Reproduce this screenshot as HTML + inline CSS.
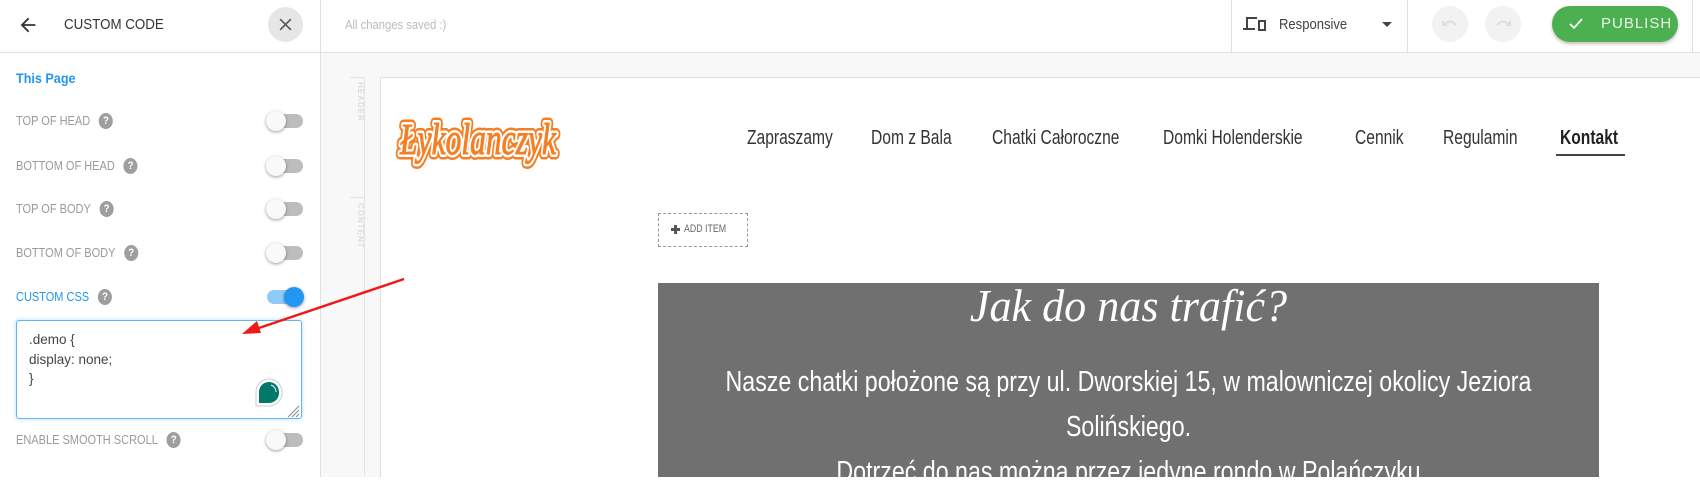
<!DOCTYPE html>
<html><head><meta charset="utf-8"><style>
*{margin:0;padding:0;box-sizing:border-box}
body{width:1700px;height:477px;overflow:hidden;background:#fff;font-family:"Liberation Sans",sans-serif;position:relative}
.a{position:absolute}
.lbl{position:absolute;left:16px;font-size:12.5px;color:#9a9a9a;transform:translateY(-50%) scaleX(.88);transform-origin:left center;white-space:nowrap;display:flex;align-items:center}
.q{display:inline-block;width:16px;height:16px;border-radius:50%;background:#9e9e9e;color:#fff;font-size:11px;font-weight:bold;text-align:center;line-height:16px;margin-left:10px}
.tg{position:absolute;left:267px;width:36px;height:14px;border-radius:7px;background:#bdbdbd;transform:translateY(-50%)}
.tg::after{content:"";position:absolute;left:-1px;top:-3px;width:20px;height:20px;border-radius:50%;background:#f9f9f9;box-shadow:0 1px 3px rgba(0,0,0,.4)}
.tg.on{background:#90caf9}.tg.on::after{left:17px;background:#2196f3}
.nav{position:absolute;top:127px;font-size:20px;color:#333;white-space:nowrap;transform:scaleX(.78);transform-origin:left top}
.p{position:absolute;left:528px;width:1201px;text-align:center;color:#fff;font-size:29px;white-space:nowrap;transform:scaleX(.8);transform-origin:center top}
</style></head><body>
<div class="a" style="left:0;top:52px;width:1700px;height:1px;background:#e0e0e0"></div>
<svg class="a" style="left:17px;top:14px" width="22" height="22" viewBox="0 0 24 24"><path d="M20 11H7.8l5.6-5.6L12 4l-8 8 8 8 1.4-1.4L7.8 13H20z" fill="#333"/></svg>
<div class="a" style="left:64px;top:17px;font-size:14.5px;color:#333;transform:scaleX(.92);transform-origin:left">CUSTOM CODE</div>
<div class="a" style="left:268px;top:7px;width:35px;height:35px;border-radius:50%;background:#e6e6e6"></div>
<svg class="a" style="left:278px;top:17px" width="15" height="15" viewBox="0 0 14 14"><path d="M2 2L12 12M12 2L2 12" stroke="#555" stroke-width="1.5"/></svg>
<div class="a" style="left:320px;top:0;width:1px;height:477px;background:#e0e0e0"></div>
<div class="a" style="left:345px;top:18px;font-size:12.5px;color:#bbb;transform:scaleX(.9);transform-origin:left">All changes saved :)</div>
<div class="a" style="left:1231px;top:0;width:1px;height:52px;background:#e0e0e0"></div>
<svg class="a" style="left:1243px;top:15px" width="24" height="18" viewBox="0 0 24 18"><path d="M3 2h11v2H5v10H3zM0 13h12v2H0zM15 5h8v11h-8zM17 7v7h4V7z" fill="#444"/></svg>
<div class="a" style="left:1279px;top:17px;font-size:14.5px;color:#444;transform:scaleX(.9);transform-origin:left">Responsive</div>
<div class="a" style="left:1382px;top:22px;border-left:5px solid transparent;border-right:5px solid transparent;border-top:5px solid #444"></div>
<div class="a" style="left:1407px;top:0;width:1px;height:52px;background:#e0e0e0"></div>
<div class="a" style="left:1432px;top:6px;width:36px;height:36px;border-radius:50%;background:#f2f2f2"></div>
<div class="a" style="left:1485px;top:6px;width:36px;height:36px;border-radius:50%;background:#f2f2f2"></div>
<svg class="a" style="left:1441px;top:16px" width="18" height="14"><path d="M3 9Q9 2 15 9" stroke="#ddd" stroke-width="2" fill="none"/><path d="M1 4v6h6z" fill="#ddd"/></svg>
<svg class="a" style="left:1494px;top:16px" width="18" height="14"><path d="M3 9Q9 2 15 9" stroke="#ddd" stroke-width="2" fill="none"/><path d="M17 4v6h-6z" fill="#ddd"/></svg>
<div class="a" style="left:1552px;top:6px;width:126px;height:36px;border-radius:18px;background:#4caf50;box-shadow:0 2px 3px rgba(0,0,0,.25);color:#e8f5e9;font-size:15px;letter-spacing:1px;line-height:36px;padding-left:49px">PUBLISH</div>
<svg class="a" style="left:1569px;top:18px" width="14" height="12" viewBox="0 0 14 12"><path d="M1 6l4 4 8-9" stroke="#fff" stroke-width="1.8" fill="none"/></svg>
<div class="a" style="left:1692px;top:0;width:1px;height:52px;background:#e0e0e0"></div>
<div class="a" style="left:16px;top:70px;font-size:14px;font-weight:bold;color:#2196f3;transform:scaleX(.9);transform-origin:left">This Page</div>
<div class="lbl" style="top:121px">TOP OF HEAD<span class="q">?</span></div><div class="tg" style="top:121px"></div>
<div class="lbl" style="top:166px">BOTTOM OF HEAD<span class="q">?</span></div><div class="tg" style="top:166px"></div>
<div class="lbl" style="top:209px">TOP OF BODY<span class="q">?</span></div><div class="tg" style="top:209px"></div>
<div class="lbl" style="top:253px">BOTTOM OF BODY<span class="q">?</span></div><div class="tg" style="top:253px"></div>
<div class="lbl" style="top:297px;color:#2196f3">CUSTOM CSS<span class="q">?</span></div><div class="tg on" style="top:297px"></div>
<div class="a" style="left:16px;top:320px;width:286px;height:99px;border:1px solid #64b5f6;border-radius:3px;box-shadow:0 0 4px rgba(33,150,243,.35);padding:9px 12px;font-size:13.5px;color:#444;line-height:19.5px">.demo {<br>display: none;<br>}</div>
<svg class="a" style="left:254px;top:378px" width="32" height="30" viewBox="0 0 32 30"><path d="M2 28V14A13 13 0 0 1 28 14a13 13 0 0 1-13 14z" fill="#fff" stroke="#ccc"/><path d="M5 25V14A10 10 0 0 1 25 14a10 10 0 0 1-10 11z" fill="#00796b"/><path d="M17 7a7 7 0 0 1 5 7" stroke="#fff" fill="none"/></svg>
<svg class="a" style="left:286px;top:404px" width="14" height="14"><path d="M13 2L2 13M13 6L6 13M13 10L10 13" stroke="#888"/></svg>
<div class="lbl" style="top:440px">ENABLE SMOOTH SCROLL<span class="q">?</span></div><div class="tg" style="top:440px"></div>
<div class="a" style="left:321px;top:53px;width:1379px;height:424px;background:#f8f8f8"></div>
<div class="a" style="left:350px;top:77px;width:15px;height:400px;border-top:1px solid #e4e4e4;border-right:1px solid #e4e4e4"></div>
<div class="a" style="left:350px;top:197px;width:15px;height:1px;background:#e4e4e4"></div>
<div class="a" style="left:351px;top:82px;width:14px;writing-mode:vertical-rl;font-size:8px;font-weight:bold;color:#ddd;letter-spacing:1px">HEADER</div>
<div class="a" style="left:351px;top:203px;width:14px;writing-mode:vertical-rl;font-size:8px;font-weight:bold;color:#ddd;letter-spacing:1px">CONTENT</div>
<div class="a" style="left:380px;top:77px;width:1320px;height:400px;background:#fff;border-left:1px solid #e0e0e0;border-top:1px solid #e0e0e0"></div>
<svg class="a" style="left:390px;top:108px" width="180" height="70" viewBox="0 0 180 70"><g font-family="Liberation Serif,serif" font-style="italic" font-size="44" text-anchor="middle" stroke-linejoin="round"><text x="88" y="46" fill="#f47f25" stroke="#f47f25" stroke-width="11" textLength="156" lengthAdjust="spacingAndGlyphs">Łykolanczyk</text><text x="88" y="46" fill="#fff" stroke="#fff" stroke-width="6" textLength="156" lengthAdjust="spacingAndGlyphs">Łykolanczyk</text><text x="88" y="46" fill="#f47f25" stroke="#f47f25" stroke-width="1" textLength="156" lengthAdjust="spacingAndGlyphs">Łykolanczyk</text></g></svg>
<div class="nav" style="left:747px">Zapraszamy</div>
<div class="nav" style="left:871px">Dom z Bala</div>
<div class="nav" style="left:992px">Chatki Całoroczne</div>
<div class="nav" style="left:1163px">Domki Holenderskie</div>
<div class="nav" style="left:1355px">Cennik</div>
<div class="nav" style="left:1443px">Regulamin</div>
<div class="nav" style="left:1560px;font-weight:bold;color:#222">Kontakt</div>
<div class="a" style="left:1556px;top:154px;width:69px;height:2px;background:#444"></div>
<div class="a" style="left:658px;top:213px;width:90px;height:34px;border:1px dashed #999"></div>
<div class="a" style="left:684px;top:223px;font-size:11px;color:#666;transform:scaleX(.8);transform-origin:left">ADD ITEM</div>
<div class="a" style="left:671px;top:228px;width:9px;height:2.5px;background:#555"></div>
<div class="a" style="left:674.3px;top:224.5px;width:2.5px;height:9px;background:#555"></div>
<div class="a" style="left:658px;top:283px;width:941px;height:194px;background:#707070"></div>
<div class="p" style="top:280px;font-family:'Liberation Serif',serif;font-style:italic;font-size:45px;transform:scaleX(.98)">Jak do nas trafić?</div>
<div class="p" style="top:366px">Nasze chatki położone są przy ul. Dworskiej 15, w malowniczej okolicy Jeziora</div>
<div class="p" style="top:411px">Solińskiego.</div>
<div class="p" style="top:456px">Dotrzeć do nas można przez jedyne rondo w Polańczyku</div>
<svg class="a" style="left:0;top:0" width="1700" height="477"><line x1="404" y1="279" x2="256" y2="329" stroke="#f01818" stroke-width="2.5"/><path d="M242 334L257 321L261 333Z" fill="#f01818"/></svg>
</body></html>
